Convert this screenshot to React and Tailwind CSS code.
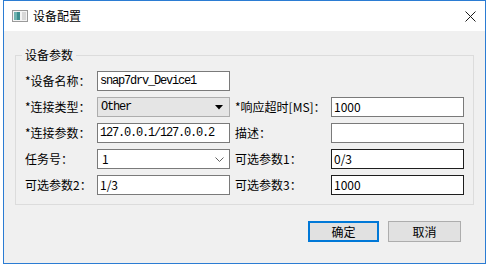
import React from 'react'

const cjk = "font-['Noto_Sans_CJK_SC',sans-serif]"
const mono = "font-['Liberation_Mono','Noto_Sans_CJK_SC',monospace] text-[12px] tracking-[-1.2px]"
const sans = "font-['Noto_Sans_CJK_SC','Liberation_Sans',sans-serif] text-[12px]"

const Label = ({ children, w }) => (
  <div className={`${cjk} text-[12px] leading-[20px] text-black ${w}`}>{children}</div>
)

const Field = ({ value, font = sans, dark }) => (
  <div
    className={`w-[133px] h-[20px] bg-white border flex items-center pl-[2px] text-black ${font} ${
      dark ? 'border-[#1e1e1e]' : 'border-[#7a7a7a]'
    }`}
  >
    {value}
  </div>
)

const Row = ({ children }) => <div className="flex items-center h-[20px]">{children}</div>

const Gap = () => <div className="w-[5px]" />

const App = () => {
  return (
    <div className="w-[487px] h-[265px] bg-white overflow-hidden">
      <div className="ml-[3px] w-[483px] h-[264px] border border-[#2b7cd3] bg-[#f0f0f0] flex flex-col">
        {/* Title bar */}
        <div className="h-[30px] bg-white flex items-center shrink-0">
          <svg width="16" height="12" viewBox="0 0 16 12" className="ml-[8px]">
            <rect x="0.5" y="0.5" width="15" height="11" fill="#f4f4f4" stroke="#9a9a9a" />
            <rect x="2" y="2" width="6" height="8" fill="#3d8f8f" />
            <rect x="2" y="2" width="3" height="8" fill="#6fb3b0" />
            <rect x="10" y="2" width="4" height="8" fill="#d8d8d8" />
          </svg>
          <span className={`${cjk} text-[12px] text-black ml-[5px]`}>设备配置</span>
          <svg width="11" height="11" viewBox="0 0 11 11" className="ml-auto mr-[9px]">
            <path d="M0.5 0.5 L10.5 10.5 M10.5 0.5 L0.5 10.5" stroke="#1a1a1a" strokeWidth="1" />
          </svg>
        </div>

        {/* Body */}
        <div className="flex-1 px-[11px] pt-[24px]">
          <div className="relative w-[459px] h-[150px] border border-[#dcdcdc] pl-[9px] pt-[15px] flex flex-col gap-[6px]">
            <span className={`absolute -top-[9px] left-[6px] px-[3px] bg-[#f0f0f0] ${cjk} text-[12px] leading-[16px] text-black`}>
              设备参数
            </span>

            <Row>
              <Label w="w-[72px]">*设备名称：</Label>
              <Field value="snap7drv_Device1" font={mono} />
            </Row>

            <Row>
              <Label w="w-[72px]">*连接类型：</Label>
              <div className={`w-[133px] h-[20px] bg-[#e5e5e5] border border-[#adadad] flex items-center pl-[3px] ${mono} text-black`}>
                Other
                <svg width="8" height="5" viewBox="0 0 8 5" className="ml-auto mr-[6px]">
                  <path d="M0 0 L8 0 L4 4.5 Z" fill="#000" />
                </svg>
              </div>
              <Gap />
              <Label w="w-[96px]">*响应超时[MS]：</Label>
              <Field value="1000" />
            </Row>

            <Row>
              <Label w="w-[72px]">*连接参数：</Label>
              <Field value="127.0.0.1/127.0.0.2" font={mono} />
              <Gap />
              <Label w="w-[96px]">描述：</Label>
              <Field value="" />
            </Row>

            <Row>
              <Label w="w-[72px]">任务号：</Label>
              <div className={`w-[133px] h-[20px] bg-white border border-[#7a7a7a] flex items-center pl-[4px] ${sans} text-black`}>
                1
                <svg width="9" height="5" viewBox="0 0 9 5" className="ml-auto mr-[5px]">
                  <path d="M0.5 0.5 L4.5 4.5 L8.5 0.5" fill="none" stroke="#606060" strokeWidth="1" />
                </svg>
              </div>
              <Gap />
              <Label w="w-[96px]">可选参数1：</Label>
              <Field value="0/3" dark />
            </Row>

            <Row>
              <Label w="w-[72px]">可选参数2：</Label>
              <Field value="1/3" />
              <Gap />
              <Label w="w-[96px]">可选参数3：</Label>
              <Field value="1000" dark />
            </Row>
          </div>

          {/* Buttons */}
          <div className="flex justify-end gap-[9px] mt-[16px] mr-[13px]">
            <button className={`w-[71px] h-[21px] bg-[#e1e1e1] border-2 border-[#0078d7] ${cjk} text-[12px] text-black leading-none`}>
              确定
            </button>
            <button className={`w-[73px] h-[21px] bg-[#e1e1e1] border border-[#adadad] ${cjk} text-[12px] text-black leading-none`}>
              取消
            </button>
          </div>
        </div>
      </div>
    </div>
  )
}

export default App
